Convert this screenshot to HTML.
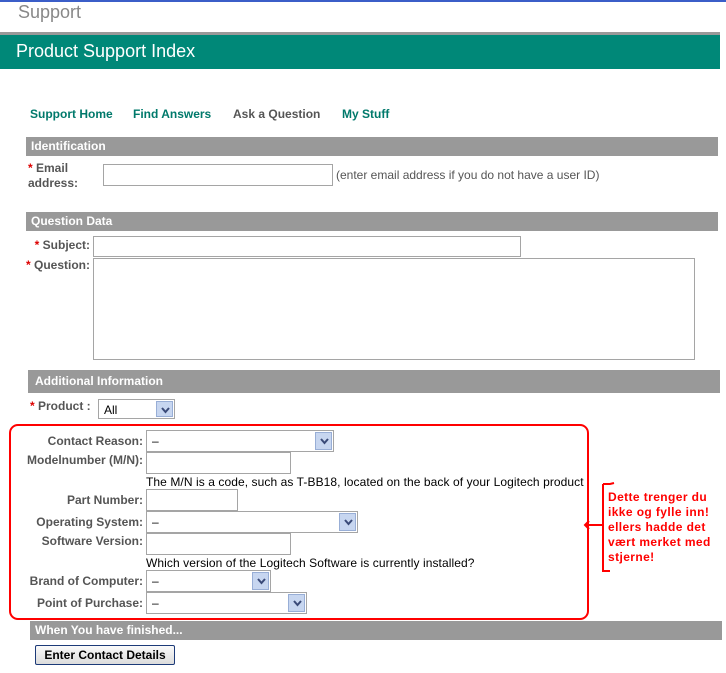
<!DOCTYPE html>
<html><head><meta charset="utf-8"><style>
*{margin:0;padding:0;box-sizing:border-box}
body{width:726px;height:673px;background:#fff;position:relative;overflow:hidden;font-family:"Liberation Sans",Arial,sans-serif;font-size:12px;color:#555}
.a{position:absolute;white-space:nowrap}
.bar{position:absolute;background:#999;color:#fff;font-weight:bold;font-size:12px;padding-left:5px;line-height:18px}
.lbl{position:absolute;font-weight:bold;color:#555;text-align:right;white-space:nowrap}
.st{color:#d00}
.in{position:absolute;border:1px solid #a5a5a5;background:#fff}
.sel{position:absolute;border:1px solid #a5a5a5;background:#fff;color:#000;font-size:12px;padding-left:5px;line-height:20px}
.sel .b{position:absolute;right:1px;top:1px;width:17px;bottom:1px;background:#c7d6f0;border:1px solid #98aed6}
.sel .b svg{position:absolute;left:4px;top:5px}
.nav{position:absolute;top:107px;font-weight:bold;color:#00796b;font-size:12px}
.red{color:#f00;font-weight:bold;font-family:"Liberation Sans",sans-serif;font-size:12px;line-height:15px;letter-spacing:0.4px}
</style></head><body>
<div class="a" style="left:0;top:0;width:726px;height:2px;background:#3b5ec8"></div>
<div class="a" style="left:18px;top:2px;font-size:18px;color:#888">Support</div>
<div class="a" style="left:0;top:32px;width:720px;height:3px;background:#999"></div>
<div class="a" style="left:0;top:35px;width:720px;height:34px;background:#008878"></div>
<div class="a" style="left:16px;top:41px;font-size:18px;color:#fff">Product Support Index</div>

<div class="nav" style="left:30px">Support Home</div>
<div class="nav" style="left:133px">Find Answers</div>
<div class="nav" style="left:233px;color:#555">Ask a Question</div>
<div class="nav" style="left:342px">My Stuff</div>

<div class="bar" style="left:26px;top:137px;width:692px;height:19px">Identification</div>
<div class="lbl" style="left:28px;top:161px;text-align:left;line-height:15px"><span class="st">*</span> Email<br>address:</div>
<div class="in" style="left:103px;top:164px;width:230px;height:22px"></div>
<div class="a" style="left:336px;top:168px">(enter email address if you do not have a user ID)</div>

<div class="bar" style="left:26px;top:212px;width:692px;height:19px">Question Data</div>
<div class="lbl" style="left:30px;top:238px;width:60px"><span class="st">*</span> Subject:</div>
<div class="in" style="left:93px;top:236px;width:428px;height:21px"></div>
<div class="lbl" style="left:20px;top:258px;width:70px"><span class="st">*</span> Question:</div>
<div class="in" style="left:93px;top:258px;width:602px;height:102px"></div>

<div class="bar" style="left:28px;top:370px;width:692px;height:23px;line-height:23px;padding-left:7px">Additional Information</div>
<div class="lbl" style="left:30px;top:399px;text-align:left"><span class="st">*</span> Product :</div>
<div class="sel" style="left:98px;top:399px;width:77px;height:20px">All<div class="b"><svg width="9" height="7"><path d="M1 1L4.5 5L8 1" stroke="#3a4a78" stroke-width="2" fill="none"/></svg></div></div>

<div class="a" style="left:9px;top:424px;width:580px;height:196px;border:2px solid #f00;border-radius:9px"></div>

<div class="lbl" style="left:0;top:434px;width:143px">Contact Reason:</div>
<div class="sel" style="left:146px;top:430px;width:188px;height:22px">–<div class="b"><svg width="9" height="7"><path d="M1 1L4.5 5L8 1" stroke="#3a4a78" stroke-width="2" fill="none"/></svg></div></div>
<div class="lbl" style="left:0;top:453px;width:143px">Modelnumber (M/N):</div>
<div class="in" style="left:146px;top:452px;width:145px;height:22px"></div>
<div class="a" style="left:146px;top:475px;color:#000;letter-spacing:0.08px">The M/N is a code, such as T-BB18, located on the back of your Logitech product</div>
<div class="lbl" style="left:0;top:493px;width:143px">Part Number:</div>
<div class="in" style="left:146px;top:489px;width:92px;height:22px"></div>
<div class="lbl" style="left:0;top:515px;width:143px">Operating System:</div>
<div class="sel" style="left:146px;top:511px;width:212px;height:22px">–<div class="b"><svg width="9" height="7"><path d="M1 1L4.5 5L8 1" stroke="#3a4a78" stroke-width="2" fill="none"/></svg></div></div>
<div class="lbl" style="left:0;top:534px;width:143px">Software Version:</div>
<div class="in" style="left:146px;top:533px;width:145px;height:22px"></div>
<div class="a" style="left:146px;top:556px;color:#000;letter-spacing:0.08px">Which version of the Logitech Software is currently installed?</div>
<div class="lbl" style="left:0;top:574px;width:143px">Brand of Computer:</div>
<div class="sel" style="left:146px;top:570px;width:125px;height:22px">–<div class="b"><svg width="9" height="7"><path d="M1 1L4.5 5L8 1" stroke="#3a4a78" stroke-width="2" fill="none"/></svg></div></div>
<div class="lbl" style="left:0;top:596px;width:143px">Point of Purchase:</div>
<div class="sel" style="left:146px;top:592px;width:161px;height:22px">–<div class="b"><svg width="9" height="7"><path d="M1 1L4.5 5L8 1" stroke="#3a4a78" stroke-width="2" fill="none"/></svg></div></div>

<svg class="a" style="left:580px;top:480px" width="40" height="95">
<path d="M23 4V91H30M23 4H30L34 3" stroke="#f00" stroke-width="2" fill="none"/>
<path d="M23 45H5M9 41L5 45L9 49" stroke="#f00" stroke-width="2" fill="none"/>
</svg>
<div class="a red" style="left:608px;top:490px">Dette trenger du<br>ikke og fylle inn!<br>ellers hadde det<br>vært merket med<br>stjerne!</div>

<div class="bar" style="left:30px;top:621px;width:692px;height:19px">When You have finished...</div>
<div class="a" style="left:35px;top:645px;width:140px;height:20px;border:1px solid #1c3a78;border-radius:2px;background:linear-gradient(#fafafa,#dcdcdc);color:#000;font-weight:bold;text-align:center;line-height:18px">Enter Contact Details</div>
</body></html>
